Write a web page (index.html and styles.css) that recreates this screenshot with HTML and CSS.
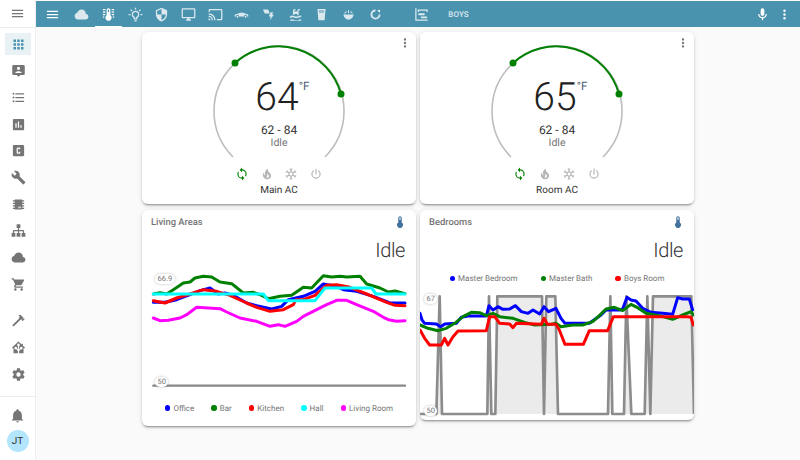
FILE: index.html
```html
<!DOCTYPE html>
<html lang="en">
<head>
<meta charset="utf-8">
<title>Boys</title>
<link rel="stylesheet" href="styles.css">
</head>
<body>
<svg class="defs" xmlns="http://www.w3.org/2000/svg">
  <symbol id="i-menu" viewBox="0 0 24 24"><path d="M3,6H21V8H3V6M3,11H21V13H3V11M3,16H21V18H3V16Z"/></symbol>
  <symbol id="i-apps" viewBox="0 0 24 24"><path d="M16,20H20V16H16M16,14H20V10H16M10,8H14V4H10M16,8H20V4H16M10,14H14V10H10M4,14H8V10H4M4,20H8V16H4M10,20H14V16H10M4,8H8V4H4V8Z"/></symbol>
  <symbol id="i-account" viewBox="0 0 24 24"><path fill-rule="evenodd" d="M4 3h16a2 2 0 0 1 2 2v12a2 2 0 0 1-2 2h-5l-3 3-3-3H4a2 2 0 0 1-2-2V5a2 2 0 0 1 2-2zM12 6a2.5 2.5 0 1 0 0 5 2.5 2.5 0 0 0 0-5zM7 15.5c0-1.7 3.3-2.5 5-2.5s5 .8 5 2.5V16H7z"/></symbol>
  <symbol id="i-list" viewBox="0 0 24 24"><path d="M7,5H21V7H7V5M7,13V11H21V13H7M4,4.5A1.5,1.5 0 0,1 5.5,6A1.5,1.5 0 0,1 4,7.5A1.5,1.5 0 0,1 2.5,6A1.5,1.5 0 0,1 4,4.5M4,10.5A1.5,1.5 0 0,1 5.5,12A1.5,1.5 0 0,1 4,13.5A1.5,1.5 0 0,1 2.5,12A1.5,1.5 0 0,1 4,10.5M7,19V17H21V19H7M4,16.5A1.5,1.5 0 0,1 5.5,18A1.5,1.5 0 0,1 4,19.5A1.5,1.5 0 0,1 2.5,18A1.5,1.5 0 0,1 4,16.5Z"/></symbol>
  <symbol id="i-chart" viewBox="0 0 24 24"><path d="M19 3H5C3.9 3 3 3.9 3 5V19C3 20.1 3.9 21 5 21H19C20.1 21 21 20.1 21 19V5C21 3.9 20.1 3 19 3M9 17H7V10H9V17M13 17H11V7H13V17M17 17H15V13H17V17Z"/></symbol>
  <symbol id="i-cbox" viewBox="0 0 24 24"><path d="M11,7A2,2 0 0,0 9,9V15A2,2 0 0,0 11,17H13A2,2 0 0,0 15,15V14H13V15H11V9H13V10H15V9A2,2 0 0,0 13,7H11M5,3H19A2,2 0 0,1 21,5V19A2,2 0 0,1 19,21H5A2,2 0 0,1 3,19V5A2,2 0 0,1 5,3Z"/></symbol>
  <symbol id="i-wrench" viewBox="0 0 24 24"><path d="M22.7,19L13.6,9.9C14.5,7.6 14,4.9 12.1,3C10.1,1 7.1,0.6 4.7,1.7L9,6L6,9L1.6,4.7C0.4,7.1 0.9,10.1 2.9,12.1C4.8,14 7.5,14.5 9.8,13.6L18.9,22.7C19.3,23.1 19.9,23.1 20.3,22.7L22.6,20.4C23.1,20 23.1,19.3 22.7,19Z"/></symbol>
  <symbol id="i-chip" viewBox="0 0 24 24"><path d="M6,4H18V5H21V7H18V9H21V11H18V13H21V15H18V17H21V19H18V20H6V19H3V17H6V15H3V13H6V11H3V9H6V7H3V5H6V4M11,15V18H12V15H11M13,15V18H14V15H13M15,15V18H16V15H15Z"/></symbol>
  <symbol id="i-sitemap" viewBox="0 0 24 24"><path d="M9,2V8H11V11H5C3.89,11 3,11.89 3,13V16H1V22H7V16H5V13H11V16H9V22H15V16H13V13H19V16H17V22H23V16H21V13C21,11.89 20.11,11 19,11H13V8H15V2H9Z"/></symbol>
  <symbol id="i-cloud" viewBox="0 0 24 24"><path d="M6.5 20Q4.22 20 2.61 18.43 1 16.85 1 14.58 1 12.63 2.17 11.1 3.35 9.57 5.25 9.15 5.88 6.85 7.75 5.43 9.63 4 12 4 14.93 4 16.96 6.04 19 8.07 19 11 20.73 11.2 21.86 12.5 23 13.78 23 15.5 23 17.38 21.69 18.69 20.38 20 18.5 20Z"/></symbol>
  <symbol id="i-cart" viewBox="0 0 24 24"><path d="M17,18C15.89,18 15,18.89 15,20A2,2 0 0,0 17,22A2,2 0 0,0 19,20C19,18.89 18.1,18 17,18M1,2V4H3L6.6,11.59L5.24,14.04C5.09,14.32 5,14.65 5,15A2,2 0 0,0 7,17H19V15H7.42A0.25,0.25 0 0,1 7.17,14.75C7.17,14.7 7.18,14.66 7.2,14.63L8.1,13H15.55C16.3,13 16.96,12.58 17.3,11.97L20.88,5.5C20.95,5.34 21,5.17 21,5A1,1 0 0,0 20,4H5.21L4.27,2M7,18C5.89,18 5,18.89 5,20A2,2 0 0,0 7,22A2,2 0 0,0 9,20C9,18.89 8.1,18 7,18Z"/></symbol>
  <symbol id="i-hammer" viewBox="0 0 24 24"><path d="M2 19.63L13.43 8.2L12.72 7.5L14.14 6.07L12 3.89C13.2 2.7 15.09 2.7 16.27 3.89L19.87 7.5L18.45 8.91H21.29L22 9.62L18.45 13.21L17.74 12.5V9.62L16.27 11.04L15.56 10.33L4.13 21.76L2 19.63Z"/></symbol>
  <symbol id="i-ha" viewBox="0 0 24 24"><path d="M21.8,13H20V21H13V17.67L15.79,14.88L16.5,15C17.66,15 18.6,14.06 18.6,12.9C18.6,11.74 17.66,10.8 16.5,10.8A2.1,2.1 0 0,0 14.4,12.9L14.5,13.61L13,15.13V9.65C13.66,9.29 14.1,8.6 14.1,7.8A2.1,2.1 0 0,0 12,5.7A2.1,2.1 0 0,0 9.9,7.8C9.9,8.6 10.34,9.29 11,9.65V15.13L9.5,13.61L9.6,12.9A2.1,2.1 0 0,0 7.5,10.8A2.1,2.1 0 0,0 5.4,12.9A2.1,2.1 0 0,0 7.5,15L8.21,14.88L11,17.67V21H4V13H2.25C1.83,13 1.42,13 1.42,12.79C1.43,12.57 1.85,12.15 2.28,11.72L11,3C11.33,2.67 11.67,2.33 12,2.33C12.33,2.33 12.67,2.67 13,3L17,7V6H19V9L21.78,11.78C22.18,12.18 22.59,12.59 22.6,12.8C22.6,13 22.2,13 21.8,13Z"/></symbol>
  <symbol id="i-cog" viewBox="0 0 24 24"><path d="M12,15.5A3.5,3.5 0 0,1 8.5,12A3.5,3.5 0 0,1 12,8.5A3.5,3.5 0 0,1 15.5,12A3.5,3.5 0 0,1 12,15.5M19.43,12.97C19.47,12.65 19.5,12.33 19.5,12C19.5,11.67 19.47,11.34 19.43,11L21.54,9.37C21.73,9.22 21.78,8.95 21.66,8.73L19.66,5.27C19.54,5.05 19.27,4.96 19.05,5.05L16.56,6.05C16.04,5.66 15.5,5.32 14.87,5.07L14.5,2.42C14.46,2.18 14.25,2 14,2H10C9.75,2 9.54,2.18 9.5,2.42L9.13,5.07C8.5,5.32 7.96,5.66 7.44,6.05L4.95,5.05C4.73,4.96 4.46,5.05 4.34,5.27L2.34,8.73C2.21,8.95 2.27,9.22 2.46,9.37L4.57,11C4.53,11.34 4.5,11.67 4.5,12C4.5,12.33 4.53,12.65 4.57,12.97L2.46,14.63C2.27,14.78 2.21,15.05 2.34,15.27L4.34,18.73C4.46,18.95 4.73,19.03 4.95,18.95L7.44,17.94C7.96,18.34 8.5,18.68 9.13,18.93L9.5,21.58C9.54,21.82 9.75,22 10,22H14C14.25,22 14.46,21.82 14.5,21.58L14.87,18.93C15.5,18.67 16.04,18.34 16.56,17.94L19.05,18.95C19.27,19.03 19.54,18.95 19.66,18.73L21.66,15.27C21.78,15.05 21.73,14.78 21.54,14.63L19.43,12.97Z"/></symbol>
  <symbol id="i-bell" viewBox="0 0 24 24"><path d="M21,19V20H3V19L5,17V11C5,7.9 7.03,5.17 10,4.29C10,4.19 10,4.1 10,4A2,2 0 0,1 12,2A2,2 0 0,1 14,4C14,4.1 14,4.19 14,4.29C16.97,5.17 19,7.9 19,11V17L21,19M14,21A2,2 0 0,1 12,23A2,2 0 0,1 10,21"/></symbol>
  <symbol id="i-dots" viewBox="0 0 24 24"><path d="M12,16A2,2 0 0,1 14,18A2,2 0 0,1 12,20A2,2 0 0,1 10,18A2,2 0 0,1 12,16M12,10A2,2 0 0,1 14,12A2,2 0 0,1 12,14A2,2 0 0,1 10,12A2,2 0 0,1 12,10M12,4A2,2 0 0,1 14,6A2,2 0 0,1 12,8A2,2 0 0,1 10,6A2,2 0 0,1 12,4Z"/></symbol>
  <symbol id="i-mic" viewBox="0 0 24 24"><path d="M12,2A3,3 0 0,1 15,5V11A3,3 0 0,1 12,14A3,3 0 0,1 9,11V5A3,3 0 0,1 12,2M19,11C19,14.53 16.39,17.44 13,17.93V21H11V17.93C7.61,17.44 5,14.53 5,11H7A5,5 0 0,0 12,16A5,5 0 0,0 17,11H19Z"/></symbol>
  <symbol id="i-thermo" viewBox="0 0 24 24"><path d="M15 13V5A3 3 0 0 0 9 5V13A5 5 0 1 0 15 13M12 4A1 1 0 0 1 13 5V8H11V5A1 1 0 0 1 12 4Z"/></symbol>
  <symbol id="i-thermolines" viewBox="0 0 24 24"><path d="M17 3H21V5H17V3M17 7H21V9H17V7M17 11H21V13H17.75L17 12.1V11M21 15V17H19C19 16.31 18.9 15.63 18.71 15H21M7 3V5H3V3H7M7 7V9H3V7H7M7 11V12.1L6.25 13H3V11H7M3 15H5.29C5.1 15.63 5 16.31 5 17H3V15M15 13V5C15 3.34 13.66 2 12 2S9 3.34 9 5V13C6.79 14.66 6.34 17.79 8 20S12.79 22.66 15 21 17.66 16.21 16 14C15.72 13.62 15.38 13.28 15 13M12 4C12.55 4 13 4.45 13 5V8H11V5C11 4.45 11.45 4 12 4Z"/></symbol>
  <symbol id="i-bulb" viewBox="0 0 24 24"><path d="M20,11H23V13H20V11M1,11H4V13H1V11M13,1V4H11V1H13M4.92,3.5L7.05,5.64L5.63,7.05L3.5,4.93L4.92,3.5M16.95,5.63L19.07,3.5L20.5,4.93L18.36,7.05L16.95,5.63M12,6A6,6 0 0,1 18,12C18,14.22 16.79,16.16 15,17.2V19A1,1 0 0,1 14,20H10A1,1 0 0,1 9,19V17.2C7.21,16.16 6,14.22 6,12A6,6 0 0,1 12,6M14,21V22A1,1 0 0,1 13,23H11A1,1 0 0,1 10,22V21H14M11,18H13V15.87C14.73,15.43 16,13.86 16,12A4,4 0 0,0 12,8A4,4 0 0,0 8,12C8,13.86 9.27,15.43 11,15.87V18Z"/></symbol>
  <symbol id="i-shield" viewBox="0 0 24 24"><path d="M12,12H19C18.47,16.11 15.72,19.78 12,20.92V12H5V6.3L12,3.19M12,1L3,5V11C3,16.55 6.84,21.73 12,23C17.16,21.73 21,16.55 21,11V5L12,1Z"/></symbol>
  <symbol id="i-monitor" viewBox="0 0 24 24"><path d="M21,16H3V4H21M21,2H3C1.89,2 1,2.89 1,4V16A2,2 0 0,0 3,18H10V20H8V22H16V20H14V18H21A2,2 0 0,0 23,16V4C23,2.89 22.1,2 21,2Z"/></symbol>
  <symbol id="i-cast" viewBox="0 0 24 24"><path d="M1,10V12A9,9 0 0,1 10,21H12C12,14.92 7.07,10 1,10M1,14V16A5,5 0 0,1 6,21H8A7,7 0 0,0 1,14M1,18V21H4A3,3 0 0,0 1,18M21,3H3C1.89,3 1,3.89 1,5V8H3V5H21V19H14V21H21A2,2 0 0,0 23,19V5C23,3.89 22.1,3 21,3Z"/></symbol>
  <symbol id="i-car" viewBox="0 0 24 24"><path d="M1 14c0-2 2-3 5-3.200L9.500 9h5.500l3.500 1.800c2.500.2 4.500 1.200 4.500 3.200v1h-2a2.500 2.500 0 0 0-5 0H8a2.500 2.500 0 0 0-5 0H1z"/><circle cx="5.500" cy="15.500" r="1.500"/><circle cx="18.500" cy="15.500" r="1.500"/></symbol>
  <symbol id="i-solar" viewBox="0 0 24 24"><path d="M3 4h8.500l2.500 6.500H6zM15.500 8.500l-3 6.500h3l-1 6 6-9h-3l2-3.500z"/></symbol>
  <symbol id="i-pool" viewBox="0 0 24 24"><path d="M3 15c1.500-.7 3-1.300 4.500-1.200 1.500.1 3 .9 4.500 1.200 1.500.4 3 .3 4.500-.4 1.500-.7 3-1 4.500-.9v2.500c-1.500-.1-3 .2-4.500.9-1.500.7-3 .8-4.500.4-1.500-.3-3-1.100-4.500-1.200C6 16.200 4.500 16.800 3 17.500zM8 12V6a3 3 0 0 1 3-3h1v2h-1a1 1 0 0 0-1 1v1h5V6a3 3 0 0 1 3-3h1v2h-1a1 1 0 0 0-1 1v7l-2 .5V11h-5v2.300zM3 21c1.500-.7 3-1.300 4.500-1.200 1.500.1 3 .9 4.500 1.200 1.500.4 3 .3 4.500-.4 1.500-.7 3-1 4.500-.9V22H3z"/></symbol>
  <symbol id="i-glass" viewBox="0 0 24 24"><path fill-rule="evenodd" d="M5.500 3h13l-1.500 18H7zM7.700 5l.3 4h8l.3-4z"/><path opacity=".5" d="M7.700 5l.3 4h8l.3-4z"/></symbol>
  <symbol id="i-bowl" viewBox="0 0 24 24"><path d="M4 12h16a8 8 0 0 1-5 7V20H9v-1a8 8 0 0 1-5-7zM11.200 5h1.600v5h-1.600zM5 10.500a7 7 0 0 1 4-4.300v1.700a5.500 5.500 0 0 0-2.300 2.600zM19 10.500a7 7 0 0 0-4-4.300v1.700a5.500 5.500 0 0 1 2.300 2.600z"/></symbol>
  <symbol id="i-ring" viewBox="0 0 24 24"><path d="M12 4a8 8 0 1 0 8 8h-3a5 5 0 1 1-5-5zM14.500 5l4.500 4.500L19.500 4.500z"/></symbol>
  <symbol id="i-timeline" viewBox="0 0 24 24"><path d="M2,2H4V20H22V22H2V2M7,10H17V13H7V10M11,15H21V18H11V15M6,4H22V8H20V6H8V8H6V4Z"/></symbol>
  <symbol id="i-sync" viewBox="0 0 24 24"><path d="M12,18A6,6 0 0,1 6,12C6,11 6.25,10.03 6.7,9.2L5.24,7.74C4.46,8.97 4,10.43 4,12A8,8 0 0,0 12,20V23L16,19L12,15M12,4V1L8,5L12,9V6A6,6 0 0,1 18,12C18,13 17.75,13.97 17.3,14.8L18.76,16.26C19.54,15.03 20,13.57 20,12A8,8 0 0,0 12,4Z"/></symbol>
  <symbol id="i-fire" viewBox="0 0 24 24"><path d="M17.66 11.2C17.43 10.9 17.15 10.64 16.89 10.38C16.22 9.78 15.46 9.35 14.82 8.72C13.33 7.26 13 4.85 13.95 3C13 3.23 12.17 3.75 11.46 4.32C8.87 6.4 7.85 10.07 9.07 13.22C9.11 13.32 9.15 13.42 9.15 13.55C9.15 13.77 9 13.97 8.8 14.05C8.57 14.15 8.33 14.09 8.14 13.93C8.08 13.88 8.04 13.83 8 13.76C6.87 12.33 6.69 10.28 7.45 8.64C5.78 10 4.87 12.3 5 14.47C5.06 14.97 5.12 15.47 5.29 15.97C5.43 16.57 5.7 17.17 6 17.7C7.08 19.43 8.95 20.67 10.96 20.92C13.1 21.19 15.39 20.8 17.03 19.32C18.86 17.66 19.5 15 18.56 12.72L18.43 12.46C18.22 12 17.66 11.2 17.66 11.2M14.5 17.5C14.22 17.74 13.76 18 13.4 18.1C12.28 18.5 11.16 17.94 10.5 17.28C11.69 17 12.4 16.12 12.61 15.23C12.78 14.43 12.46 13.77 12.33 13C12.21 12.26 12.23 11.63 12.5 10.94C12.69 11.32 12.89 11.7 13.13 12C13.9 13 15.11 13.44 15.37 14.8C15.41 14.94 15.43 15.08 15.43 15.23C15.46 16.05 15.1 16.95 14.5 17.5H14.5Z"/></symbol>
  <symbol id="i-snow" viewBox="0 0 24 24"><path d="M20.79,13.95L18.46,14.57L16.46,13.44V10.56L18.46,9.43L20.79,10.05L21.31,8.12L19.54,7.65L20,5.88L18.07,5.36L17.45,7.69L15.45,8.82L13,7.38V5.12L14.71,3.41L13.29,2L12,3.29L10.71,2L9.29,3.41L11,5.12V7.38L8.5,8.82L6.5,7.69L5.92,5.36L4,5.88L4.47,7.65L2.7,8.12L3.22,10.05L5.55,9.43L7.55,10.56V13.45L5.55,14.58L3.22,13.96L2.7,15.89L4.47,16.36L4,18.12L5.93,18.64L6.55,16.31L8.55,15.18L11,16.62V18.88L9.29,20.59L10.71,22L12,20.71L13.29,22L14.7,20.59L13,18.88V16.62L15.5,15.17L17.5,16.3L18.12,18.63L20,18.12L19.53,16.35L21.3,15.88L20.79,13.95M9.5,10.56L12,9.11L14.5,10.56V13.44L12,14.89L9.5,13.44V10.56Z"/></symbol>
  <symbol id="i-power" viewBox="0 0 24 24"><path d="M16.56,5.44L15.11,6.89C16.84,7.94 18,9.83 18,12A6,6 0 0,1 12,18A6,6 0 0,1 6,12C6,9.83 7.16,7.94 8.88,6.88L7.44,5.44C5.36,6.88 4,9.28 4,12A8,8 0 0,0 12,20A8,8 0 0,0 20,12C20,9.28 18.64,6.88 16.56,5.44M13,3H11V13H13"/></symbol>
</svg>

<div class="app">
  <aside class="sidebar">
    <div class="side-top"><svg class="ico"><use href="#i-menu"/></svg></div>
    <nav class="side-group">
      <a class="side-item active"><svg class="ico"><use href="#i-apps"/></svg></a>
      <a class="side-item"><svg class="ico"><use href="#i-account"/></svg></a>
      <a class="side-item"><svg class="ico"><use href="#i-list"/></svg></a>
      <a class="side-item"><svg class="ico"><use href="#i-chart"/></svg></a>
      <a class="side-item"><svg class="ico"><use href="#i-cbox"/></svg></a>
      <a class="side-item"><svg class="ico"><use href="#i-wrench"/></svg></a>
      <a class="side-item"><svg class="ico"><use href="#i-chip"/></svg></a>
      <a class="side-item"><svg class="ico"><use href="#i-sitemap"/></svg></a>
      <a class="side-item"><svg class="ico"><use href="#i-cloud"/></svg></a>
      <a class="side-item"><svg class="ico"><use href="#i-cart"/></svg></a>
    </nav>
    <nav class="side-group second">
      <a class="side-item"><svg class="ico"><use href="#i-hammer"/></svg></a>
      <a class="side-item"><svg class="ico"><use href="#i-ha"/></svg></a>
      <a class="side-item"><svg class="ico"><use href="#i-cog"/></svg></a>
    </nav>
    <div class="side-bottom">
      <a class="side-bell"><svg class="ico"><use href="#i-bell"/></svg></a>
      <div class="avatar">JT</div>
    </div>
  </aside>

  <div class="main">
    <header class="topbar">
      <a class="top-menu"><svg class="ico"><use href="#i-menu"/></svg></a>
      <a class="tab"><svg class="ico"><use href="#i-cloud"/></svg></a>
      <a class="tab active"><svg class="ico"><use href="#i-thermolines"/></svg></a>
      <a class="tab"><svg class="ico"><use href="#i-bulb"/></svg></a>
      <a class="tab"><svg class="ico"><use href="#i-shield"/></svg></a>
      <a class="tab"><svg class="ico"><use href="#i-monitor"/></svg></a>
      <a class="tab"><svg class="ico"><use href="#i-cast"/></svg></a>
      <a class="tab"><svg class="ico"><use href="#i-car"/></svg></a>
      <a class="tab"><svg class="ico"><use href="#i-solar"/></svg></a>
      <a class="tab"><svg class="ico"><use href="#i-pool"/></svg></a>
      <a class="tab"><svg class="ico"><use href="#i-glass"/></svg></a>
      <a class="tab"><svg class="ico"><use href="#i-bowl"/></svg></a>
      <a class="tab"><svg class="ico"><use href="#i-ring"/></svg></a>
      <a class="tab timeline"><svg class="ico"><use href="#i-timeline"/></svg></a>
      <span class="tab-label">BOYS</span>
      <div class="top-actions">
        <a class="top-action"><svg class="ico"><use href="#i-mic"/></svg></a>
        <a class="top-action"><svg class="ico"><use href="#i-dots"/></svg></a>
      </div>
    </header>

    <main class="board">
      <section class="card thermostat">
        <svg class="ico card-menu"><use href="#i-dots"/></svg>
        <div class="gauge">
          <svg class="gauge-arc" viewBox="0 0 150 124">
            <path class="arc-bg" d="M29 117A65 65 0 1 1 121 117"/>
            <path class="arc-on" d="M31 23A65 65 0 0 1 137 54"/>
            <circle class="arc-dot" cx="31" cy="23" r="3.500"/>
            <circle class="arc-dot" cx="137" cy="54" r="3.500"/>
          </svg>
          <div class="readout">
            <div class="temp">64<span class="unit">°F</span></div>
            <div class="range">62 - 84</div>
            <div class="mode">Idle</div>
          </div>
        </div>
        <div class="modes">
          <svg class="ico on"><use href="#i-sync"/></svg>
          <svg class="ico"><use href="#i-fire"/></svg>
          <svg class="ico"><use href="#i-snow"/></svg>
          <svg class="ico"><use href="#i-power"/></svg>
        </div>
        <div class="name">Main AC</div>
      </section>

      <section class="card thermostat">
        <svg class="ico card-menu"><use href="#i-dots"/></svg>
        <div class="gauge">
          <svg class="gauge-arc" viewBox="0 0 150 124">
            <path class="arc-bg" d="M29 117A65 65 0 1 1 121 117"/>
            <path class="arc-on" d="M31 23A65 65 0 0 1 137 54"/>
            <circle class="arc-dot" cx="31" cy="23" r="3.500"/>
            <circle class="arc-dot" cx="137" cy="54" r="3.500"/>
          </svg>
          <div class="readout">
            <div class="temp">65<span class="unit">°F</span></div>
            <div class="range">62 - 84</div>
            <div class="mode">Idle</div>
          </div>
        </div>
        <div class="modes">
          <svg class="ico on"><use href="#i-sync"/></svg>
          <svg class="ico"><use href="#i-fire"/></svg>
          <svg class="ico"><use href="#i-snow"/></svg>
          <svg class="ico"><use href="#i-power"/></svg>
        </div>
        <div class="name">Room AC</div>
      </section>

      <section class="card graph">
        <div class="graph-head">
          <span class="graph-title">Living Areas</span>
          <svg class="ico graph-icon"><use href="#i-thermo"/></svg>
        </div>
        <div class="graph-state">Idle</div>
        <div class="plot plot-living">
          <svg viewBox="6 180 822 396">
            <polyline class="line base" points="40,533 795,533"/>
            <polyline class="line blue" points="40,283 75,283 110,275 150,260 180,248 210,240 235,258 255,255 280,262 320,285 350,293 395,303 425,295 445,275 490,265 525,250 550,228 590,235 610,245 650,250 700,265 750,285 795,285"/>
            <polyline class="line green" points="40,258 60,254 80,258 100,245 130,225 150,222 165,210 190,205 215,207 240,222 275,227 310,255 340,253 365,262 385,272 420,265 455,262 490,238 515,240 550,203 575,207 600,205 620,207 660,205 680,228 720,240 745,252 765,249 795,257"/>
            <polyline class="line red" points="40,278 75,285 110,270 150,258 190,245 230,250 270,262 320,285 350,298 390,310 430,305 460,290 468,275 490,275 525,262 560,232 590,230 630,238 680,258 740,283 765,292 795,293"/>
            <polyline class="line cyan" points="40,258 370,258 385,278 525,278 555,240 695,240 708,258 795,258"/>
            <polyline class="line magenta" points="40,330 60,338 85,337 120,330 140,320 170,298 240,302 260,312 300,330 350,340 390,355 415,350 435,355 470,340 490,325 530,305 560,290 590,277 620,277 650,290 700,310 730,328 745,335 770,340 795,338"/>
          </svg>
          <span class="pill pill-a">66.9</span>
          <span class="pill pill-b">50</span>
        </div>
        <div class="legend legend-bottom">
          <span class="legend-item"><i class="dot blue"></i>Office</span>
          <span class="legend-item"><i class="dot green"></i>Bar</span>
          <span class="legend-item"><i class="dot red"></i>Kitchen</span>
          <span class="legend-item"><i class="dot cyan"></i>Hall</span>
          <span class="legend-item"><i class="dot magenta"></i>Living Room</span>
        </div>
      </section>

      <section class="card graph">
        <div class="graph-head">
          <span class="graph-title">Bedrooms</span>
          <svg class="ico graph-icon"><use href="#i-thermo"/></svg>
        </div>
        <div class="graph-state">Idle</div>
        <div class="legend legend-top">
          <span class="legend-item"><i class="dot blue"></i>Master Bedroom</span>
          <span class="legend-item"><i class="dot green"></i>Master Bath</span>
          <span class="legend-item"><i class="dot red"></i>Boys Room</span>
        </div>
        <div class="plot plot-bedrooms">
          <svg viewBox="6 246 822 390">
            <polygon class="area" points="6,618 55,618 65,265 72,618 208,618 213,265 220,618 232,618 238,265 372,265 378,618 385,265 412,265 420,618 570,618 577,265 583,618 618,618 625,265 640,618 680,618 688,265 697,618 705,265 820,265 828,618"/>
            <polyline class="line shade" points="6,618 55,618 65,265 72,618 208,618 213,265 220,618 232,618 238,265 372,265 378,618 385,265 412,265 420,618 570,618 577,265 583,618 618,618 625,265 640,618 680,618 688,265 697,618 705,265 820,265 828,618"/>
            <polyline class="line blue" points="6,316 12,336 20,346 55,348 68,356 80,348 115,346 130,328 150,324 205,324 213,293 225,306 240,296 255,304 275,303 292,293 310,311 330,316 345,306 365,318 378,296 392,311 414,301 429,331 441,346 514,346 549,321 564,306 604,306 614,303 627,268 639,276 654,279 674,301 699,313 734,316 764,319 779,269 794,273 814,273 824,306"/>
            <polyline class="line green" points="6,351 30,361 60,368 85,361 110,346 135,326 160,313 185,314 205,323 225,316 245,326 285,331 320,343 350,351 400,349 414,346 429,356 464,351 494,351 524,341 544,323 564,303 589,298 614,308 639,289 659,299 684,316 724,323 764,334 794,321 819,311 826,321"/>
            <polyline class="line red" points="6,366 20,391 35,411 70,411 80,391 90,411 105,386 120,369 205,368 215,326 230,326 245,346 275,348 285,359 295,346 370,349 378,331 388,349 414,349 424,366 441,409 496,409 514,368 569,368 586,326 809,326 819,328 826,351"/>
          </svg>
          <span class="pill pill-c">67</span>
          <span class="pill pill-d">50</span>
        </div>
      </section>
    </main>
  </div>
</div>
</body>
</html>
```

FILE: styles.css
```css
* { box-sizing: border-box; }

html, body {
  margin: 0;
  height: 100%;
  overflow: hidden;
}
body {
  background: #fafafa;
  color: #212121;
  font-family: Roboto, "Liberation Sans", sans-serif;
  text-rendering: geometricPrecision;
}
.defs { display: none; }
.ico {
  display: block;
  width: 15px;
  height: 15px;
  fill: currentColor;
}

.app {
  display: flex;
  height: 460px;
}

/* sidebar */
.sidebar {
  display: flex;
  flex-direction: column;
  width: 36px;
  background: #fff;
  border-right: 1px solid #eee;
  color: #757575;
}
.side-top {
  display: flex;
  align-items: center;
  justify-content: center;
  height: 28px;
  flex: none;
  border-bottom: 1px solid #eee;
}
.side-group { padding-top: 3px; }
.side-group.second { padding-top: 10px; }
.side-item {
  display: flex;
  align-items: center;
  justify-content: center;
  height: 26.65px;
  margin: 0 4px 0 5px;
  border-radius: 4px;
}
.side-item.active {
  color: #4a93af;
  background: linear-gradient(#e8f2f5, #e8f2f5) center / 100% 22px no-repeat;
}
.side-bottom {
  display: flex;
  flex-direction: column;
  align-items: center;
  margin-top: auto;
  height: 64px;
  padding-top: 11px;
  border-top: 1px solid #eee;
}
.side-bell { height: 17px; }
.avatar {
  display: flex;
  align-items: center;
  justify-content: center;
  width: 22px;
  height: 22px;
  margin-top: 5px;
  border-radius: 50%;
  background: #b3e5fc;
  color: #333;
  font-size: 10px;
}

/* top bar */
.main {
  flex: 1;
  min-width: 0;
}
.topbar {
  display: flex;
  align-items: stretch;
  height: 26px;
  margin-top: 1px;
  background: #4a93af;
  color: rgba(255, 255, 255, .8);
}
.top-menu {
  display: flex;
  align-items: center;
  justify-content: center;
  width: 32.6px;
  color: #fff;
}
.tab {
  display: flex;
  align-items: center;
  justify-content: center;
  width: 26.68px;
  height: 27px;
  border-bottom: 2px solid transparent;
  padding-top: 2px;
}
.tab.active {
  color: #fff;
  border-bottom-color: #fff;
}
.tab.timeline { margin-left: 20px; }
.tab-label {
  align-self: center;
  margin-left: 13px;
  font-size: 8px;
  font-weight: 500;
  letter-spacing: .1px;
}
.top-actions {
  display: flex;
  margin-left: auto;
  padding-right: 5px;
}
.top-action {
  display: flex;
  align-items: center;
  justify-content: center;
  width: 22px;
  color: #fff;
}

/* cards */
.board {
  display: grid;
  grid-template-columns: 274px 274px;
  column-gap: 4px;
  row-gap: 6px;
  align-items: start;
  justify-content: center;
  padding-top: 5px;
}
.card {
  position: relative;
  background: #fff;
  border-radius: 6px;
  box-shadow: 0 2px 2px rgba(0, 0, 0, .14), 0 1px 5px rgba(0, 0, 0, .12), 0 3px 1px -2px rgba(0, 0, 0, .2);
}
.card-menu {
  position: absolute;
  top: 4px;
  right: 4px;
  width: 14px;
  height: 14px;
  color: #757575;
}

/* thermostat */
.thermostat {
  display: flex;
  flex-direction: column;
  align-items: center;
  height: 172px;
  padding-top: 8px;
}
.gauge {
  position: relative;
  width: 150px;
  height: 124px;
}
.gauge-arc {
  display: block;
  width: 150px;
  height: 124px;
}
.arc-bg, .arc-on { fill: none; }
.arc-bg { stroke: #bdbdbd; stroke-width: 1.600; }
.arc-on { stroke: #008000; stroke-width: 2; }
.arc-dot { fill: #008000; }
.readout {
  position: absolute;
  top: 35px;
  left: 0;
  right: 0;
  display: flex;
  flex-direction: column;
  align-items: center;
}
.temp {
  position: relative;
  margin-right: 4px;
  font-size: 39px;
  font-weight: 350;
  line-height: 44px;
  color: #212121;
}
.unit {
  position: absolute;
  left: 100%;
  top: 4px;
  font-size: 11.500px;
  font-weight: 400;
  line-height: 14px;
  color: #50607a;
}
.range {
  margin-top: 4px;
  font-size: 12px;
  line-height: 14px;
  color: #333;
}
.mode {
  margin-top: -1px;
  font-size: 10.500px;
  line-height: 13px;
  color: #757575;
}
.modes {
  display: flex;
  gap: 10.500px;
  height: 19px;
  align-items: center;
  color: #b5b5b5;
}
.modes .ico {
  width: 14px;
  height: 14px;
}
.modes .on { color: #008000; }
.name {
  font-size: 10px;
  line-height: 16px;
  color: #333;
}

/* history graphs */
.graph { overflow: hidden; }
.graph-head {
  display: flex;
  align-items: center;
  justify-content: space-between;
  height: 16px;
  margin-top: 4px;
  padding: 0 9px;
}
.graph-title {
  font-size: 9.400px;
  font-weight: 500;
  color: #757575;
}
.graph-icon {
  width: 14px;
  height: 14px;
  color: #44739e;
}
.graph-state {
  height: 27px;
  margin-top: 7px;
  padding-right: 11px;
  text-align: right;
  font-size: 20px;
  font-weight: 300;
  letter-spacing: -.4px;
  line-height: 27px;
  color: #333;
}
.plot { position: relative; }
.plot svg {
  display: block;
  width: 274px;
}
.plot-living { margin-top: 4px; }
.plot-living svg { height: 132px; }
.plot-bedrooms svg { height: 130px; }
.line {
  fill: none;
  stroke-width: 9;
  stroke-linejoin: round;
  stroke-linecap: round;
}
.line.base { stroke: #888; stroke-width: 7; }
.line.shade { stroke: #8c8c8c; stroke-width: 8; stroke-linecap: butt; }
.area { fill: #ebebeb; }
.line.blue { stroke: #00f; }
.line.green { stroke: #008000; }
.line.red { stroke: #f00; }
.line.cyan { stroke: #0ff; }
.line.magenta { stroke: #f0f; }
.pill {
  position: absolute;
  height: 10px;
  padding: 0 2.500px;
  background: #fff;
  border-radius: 5px;
  box-shadow: 0 0 3px rgba(0, 0, 0, .25);
  font-size: 7.500px;
  line-height: 10px;
  color: #757575;
}
.pill-a { top: 6px; left: 13px; }
.pill-b { top: 109px; left: 13px; }
.pill-c { top: 4px; left: 4px; }
.pill-d { top: 116px; left: 4px; }

.legend {
  display: flex;
  justify-content: center;
  align-items: center;
  font-size: 8px;
  color: #757575;
}
.legend-bottom {
  gap: 17px;
  height: 16px;
  margin-bottom: 10px;
}
.legend-top {
  gap: 23px;
  height: 23px;
  margin-top: 3px;
}
.legend-item {
  display: flex;
  align-items: center;
  gap: 3px;
}
.dot {
  width: 5.500px;
  height: 5.500px;
  border-radius: 50%;
}
.dot.blue { background: #00f; }
.dot.green { background: #008000; }
.dot.red { background: #f00; }
.dot.cyan { background: #0ff; }
.dot.magenta { background: #f0f; }
```
